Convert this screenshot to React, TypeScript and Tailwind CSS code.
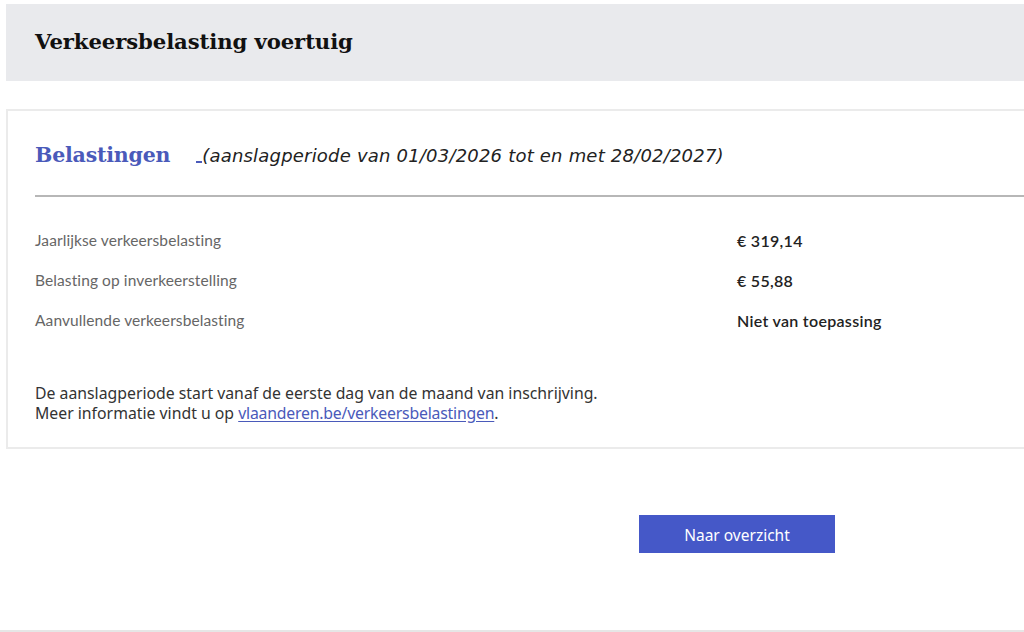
const rows = [
  { label: 'Jaarlijkse verkeersbelasting', value: '€ 319,14' },
  { label: 'Belasting op inverkeerstelling', value: '€ 55,88' },
  { label: 'Aanvullende verkeersbelasting', value: 'Niet van toepassing' },
];

const App = () => {
  return (
    <div className="w-[1024px] h-[632px] bg-white overflow-hidden flex flex-col font-['Lato',sans-serif]">
      {/* page header */}
      <div className="mt-1 ml-[6px] h-[77px] bg-[#e9eaed] flex items-center pl-[29px]">
        <h1 className="font-['DejaVu_Serif',serif] font-bold text-[21.2px] text-[#111] tracking-[-0.1px] pb-[1px]">
          Verkeersbelasting voertuig
        </h1>
      </div>

      {/* taxes card */}
      <section className="mt-[28px] ml-[6px] h-[340px] border-2 border-r-0 border-[#ebebeb] pl-[27px] flex flex-col">
        <div className="flex items-center h-[84px] pt-[4px]">
          <h2 className="font-['DejaVu_Serif',serif] font-bold text-[20.5px] text-[#4a5aba] tracking-[-0.2px]">
            Belastingen
          </h2>
          <span className="ml-[26px] mt-[14px] w-[6px] h-[2px] bg-[#4a5aba]"></span>
          <p className="font-['DejaVu_Sans',sans-serif] italic text-[18px] tracking-[0.2px] text-[#222]">
            (aanslagperiode van 01/03/2026 tot en met 28/02/2027)
          </p>
        </div>
        <div className="h-[2px] bg-[#b7b7b7]"></div>

        <div className="mt-[24px] flex flex-col">
          {rows.map((row) => (
            <div key={row.label} className="flex items-center h-[40px]">
              <span className="w-[702px] text-[15.5px] tracking-[0.1px] text-[#666]">{row.label}</span>
              <span className="text-[16px] font-semibold tracking-[0.3px] text-[#222]">{row.value}</span>
            </div>
          ))}
        </div>

        <div className="mt-[42px] font-['Noto_Sans',sans-serif] text-[15.8px] leading-[20px] text-[#333]">
          <p>De aanslagperiode start vanaf de eerste dag van de maand van inschrijving.</p>
          <p>
            Meer informatie vindt u op{' '}
            <a href="#" className="text-[#4a5aba] underline underline-offset-2 tracking-[-0.2px]">
              vlaanderen.be/verkeersbelastingen
            </a>
            .
          </p>
        </div>
      </section>

      {/* actions */}
      <div className="mt-[66px] pl-[639px]">
        <button className="w-[196px] h-[38px] pt-[4px] bg-[#4558c8] text-white text-[15.5px] font-['Noto_Sans',sans-serif]">
          Naar overzicht
        </button>
      </div>

      <div className="mt-auto h-[2px] bg-[#e6e6e6]"></div>
    </div>
  );
};

export default App;
